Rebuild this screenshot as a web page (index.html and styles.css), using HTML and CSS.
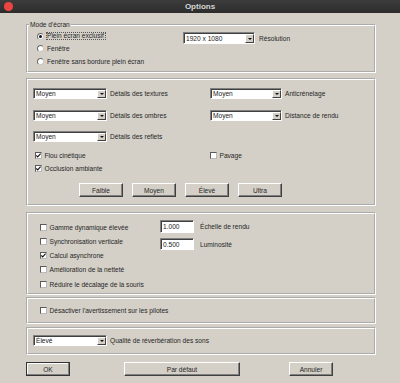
FILE: index.html
```html
<!DOCTYPE html>
<html lang="fr">
<head>
<meta charset="utf-8">
<title>Options</title>
<link rel="stylesheet" href="styles.css">
</head>
<body>
<div class="window">
  <div class="titlebar">
    <span class="close"></span>
    <span class="title">Options</span>
    <span></span>
  </div>
  <div class="content">
    <fieldset class="group g1">
      <legend>Mode d'écran</legend>
      <div class="g1-body">
        <div class="radios">
          <div class="opt"><span class="rb checked"></span><span class="txt focus">Plein écran exclusif</span></div>
          <div class="opt"><span class="rb"></span><span class="txt">Fenêtre</span></div>
          <div class="opt"><span class="rb"></span><span class="txt">Fenêtre sans bordure plein écran</span></div>
        </div>
        <div class="field res">
          <div class="combo w72"><span class="val">1920 x 1080</span><span class="arrow"></span></div>
          <span class="lbl">Résolution</span>
        </div>
      </div>
    </fieldset>

    <fieldset class="group g2">
      <div class="g2-grid">
        <div class="field"><div class="combo w74"><span class="val">Moyen</span><span class="arrow"></span></div><span class="lbl">Détails des textures</span></div>
        <div class="field"><div class="combo w72"><span class="val">Moyen</span><span class="arrow"></span></div><span class="lbl">Anticrénelage</span></div>
        <div class="field"><div class="combo w74"><span class="val">Moyen</span><span class="arrow"></span></div><span class="lbl">Détails des ombres</span></div>
        <div class="field"><div class="combo w72"><span class="val">Moyen</span><span class="arrow"></span></div><span class="lbl">Distance de rendu</span></div>
        <div class="field"><div class="combo w74"><span class="val">Moyen</span><span class="arrow"></span></div><span class="lbl">Détails des reflets</span></div>
      </div>
      <div class="g2-checks">
        <div class="opt ind"><span class="cb"><svg viewBox="0 0 7 7" width="7" height="7"><polyline points="1.3,3.4 2.7,4.9 5.6,1.6" fill="none" stroke="#111" stroke-width="1.1"/></svg></span><span class="txt">Flou cinétique</span></div>
        <div class="opt"><span class="cb"></span><span class="txt">Pavage</span></div>
        <div class="opt ind"><span class="cb"><svg viewBox="0 0 7 7" width="7" height="7"><polyline points="1.3,3.4 2.7,4.9 5.6,1.6" fill="none" stroke="#111" stroke-width="1.1"/></svg></span><span class="txt">Occlusion ambiante</span></div>
      </div>
      <div class="presets">
        <button class="btn w44">Faible</button>
        <button class="btn w44">Moyen</button>
        <button class="btn w44">Élevé</button>
        <button class="btn w44">Ultra</button>
      </div>
    </fieldset>

    <fieldset class="group g3">
      <div class="g3-body">
        <div class="checks">
          <div class="opt row"><span class="cb"></span><span class="txt">Gamme dynamique élevée</span></div>
          <div class="opt row"><span class="cb"></span><span class="txt">Synchronisation verticale</span></div>
          <div class="opt row"><span class="cb"><svg viewBox="0 0 7 7" width="7" height="7"><polyline points="1.3,3.4 2.7,4.9 5.6,1.6" fill="none" stroke="#111" stroke-width="1.1"/></svg></span><span class="txt">Calcul asynchrone</span></div>
          <div class="opt row"><span class="cb"></span><span class="txt">Amélioration de la netteté</span></div>
          <div class="opt row"><span class="cb"></span><span class="txt">Réduire le décalage de la souris</span></div>
        </div>
        <div class="inputs">
          <div class="field in1"><span class="input">1.000</span><span class="lbl wide">Échelle de rendu</span></div>
          <div class="field in2"><span class="input">0.500</span><span class="lbl wide">Luminosité</span></div>
        </div>
      </div>
    </fieldset>

    <fieldset class="group g4">
      <div class="opt"><span class="cb"></span><span class="txt">Désactiver l'avertissement sur les pilotes</span></div>
    </fieldset>

    <fieldset class="group g5">
      <div class="field"><div class="combo w74"><span class="val">Élevé</span><span class="arrow"></span></div><span class="lbl">Qualité de réverbération des sons</span></div>
    </fieldset>

    <div class="actions">
      <button class="btn w44 default">OK</button>
      <button class="btn wide-btn">Par défaut</button>
      <button class="btn w44 cancel">Annuler</button>
    </div>
  </div>
</div>
</body>
</html>
```
FILE: styles.css
```css
* { box-sizing: border-box; }

html, body {
  margin: 0;
  padding: 0;
}

body {
  width: 400px;
  height: 383px;
  overflow: hidden;
  background: #d4d0c8;
  font-family: "Liberation Sans", Arial, sans-serif;
  font-size: 6.6px;
  color: #262626;
}

.window {
  width: 400px;
  height: 383px;
}

.titlebar {
  height: 13px;
  background: linear-gradient(#3c3c3c, #2c2c2c);
  display: grid;
  grid-template-columns: 1fr auto 1fr;
  align-items: center;
}

.close {
  justify-self: start;
  width: 8.5px;
  height: 8.5px;
  margin-left: 4px;
  border-radius: 50%;
  background: #ea4540;
}

.title {
  font-weight: bold;
  font-size: 8px;
  color: #d6d6d6;
  line-height: 13px;
}

.content {
  padding: 8px 0 0 26px;
  display: flex;
  flex-direction: column;
}

.group {
  margin: 0;
  padding: 0;
  min-width: 0;
  width: 350px;
  border: 2px groove #ffffff;
}

.group legend {
  padding: 0 1px;
  margin-left: 1px;
  line-height: 8px;
  font-size: 6.6px;
}

/* group 1 */
.g1 { height: 52px; }

.g1-body {
  display: grid;
  grid-template-columns: 146px auto;
  align-items: start;
  padding: 1px 0 0 9px;
}

.radios {
  display: flex;
  flex-direction: column;
}

.radios .opt { height: 12.5px; }

.opt {
  display: flex;
  align-items: center;
  white-space: nowrap;
}

.rb {
  width: 7px;
  height: 7px;
  border-radius: 50%;
  border: 1px solid;
  border-color: #6a6a6a #c8c8c8 #c8c8c8 #6a6a6a;
  background: #fff;
  display: flex;
  align-items: center;
  justify-content: center;
  flex: none;
}

.rb.checked::after {
  content: "";
  width: 3px;
  height: 3px;
  border-radius: 50%;
  background: #111;
}

.rb + .txt { margin-left: 3px; }

.focus {
  margin-left: 2px !important;
  border: 1px dotted #555;
  height: 8px;
  line-height: 6px;
  padding: 0 1px 0 0;
}

.res { margin-top: 2px; }

.field {
  display: flex;
  align-items: center;
  white-space: nowrap;
}

.lbl { margin-left: 3px; }
.res .lbl { margin-left: 4px; }
.lbl.wide { margin-left: 6px; }

.combo {
  display: flex;
  height: 11px;
  background: #fff;
  border: 1px solid;
  border-color: #808080 #ffffff #ffffff #808080;
  box-shadow: inset 1px 1px 0 #404040;
  align-items: stretch;
  flex: none;
}

.combo.w72 { width: 72px; }
.combo.w74 { width: 74px; }
.res .combo { height: 12px; }

.combo .val {
  flex: 1;
  padding-left: 2px;
  display: flex;
  align-items: center;
  color: #1a1a1a;
  overflow: hidden;
}

.combo .arrow {
  width: 9px;
  margin: 1px 0 0 0;
  background: #d4d0c8;
  border: 1px solid;
  border-color: #ffffff #404040 #404040 #ffffff;
  display: flex;
  align-items: center;
  justify-content: center;
}

.combo .arrow::after {
  content: "";
  border-left: 2px solid transparent;
  border-right: 2px solid transparent;
  border-top: 2px solid #111;
}

/* group 2 */
.g2 {
  margin-top: 5px;
  height: 128px;
  padding: 8px 0 0 5px;
}

.g2-grid {
  display: grid;
  grid-template-columns: 177px auto;
  grid-auto-rows: 11px;
  row-gap: 10.5px;
}

.g2-checks {
  margin-top: 8px;
  display: grid;
  grid-template-columns: 177px auto;
  grid-auto-rows: 10px;
  row-gap: 3.5px;
}

.ind { margin-left: 2px; }

.cb {
  width: 7px;
  height: 7px;
  border: 1px solid;
  border-color: #5a5a5a #b8b8b8 #b8b8b8 #5a5a5a;
  background: #fff;
  flex: none;
  position: relative;
  overflow: hidden;
}

.cb svg {
  display: block;
  margin: -1px 0 0 -1px;
}

.cb + .txt { margin-left: 2.5px; }

.presets {
  margin: 9.5px 0 0 46px;
  display: flex;
  gap: 9px;
}

.btn {
  height: 14px;
  padding: 0;
  margin: 0;
  font-family: inherit;
  font-size: 6.6px;
  color: #262626;
  background: #d4d0c8;
  border: 1px solid;
  border-color: #ffffff #404040 #404040 #ffffff;
  box-shadow: inset -1px -1px 0 #808080;
  border-radius: 0;
}

.btn.w44 { width: 44px; }

/* group 3 */
.g3 {
  margin-top: 6px;
  height: 83px;
  padding: 6px 0 0 12px;
}

.g3-body {
  display: grid;
  grid-template-columns: 120px auto;
  align-items: start;
}

.checks .row { height: 14.25px; }

.inputs {
  display: flex;
  flex-direction: column;
  gap: 5px;
}

.in1 { height: 13px; }
.in2 { height: 12px; }

.input {
  width: 34px;
  height: 100%;
  background: #fff;
  border: 1px solid;
  border-color: #808080 #ffffff #ffffff #808080;
  box-shadow: inset 1px 1px 0 #404040;
  padding-left: 2px;
  display: flex;
  align-items: center;
  color: #1a1a1a;
}

/* group 4 */
.g4 {
  margin-top: 2px;
  height: 27px;
  padding: 6px 0 0 12px;
}

.g4 .opt { height: 10px; }

/* group 5 */
.g5 {
  margin-top: 3px;
  height: 28px;
  padding: 6px 0 0 5px;
}

.g5 .combo { height: 10.5px; }

/* bottom buttons */
.actions {
  margin-top: 7px;
  display: flex;
}

.btn.default {
  border-color: #ffffff #222 #222 #ffffff;
  outline: 1px solid #333;
  outline-offset: -1px;
  box-shadow: inset -1px -1px 0 #808080, inset 1px 1px 0 #fff;
}

.btn.wide-btn {
  width: 116px;
  margin-left: 54px;
}

.btn.cancel { margin-left: 49px; }
```
